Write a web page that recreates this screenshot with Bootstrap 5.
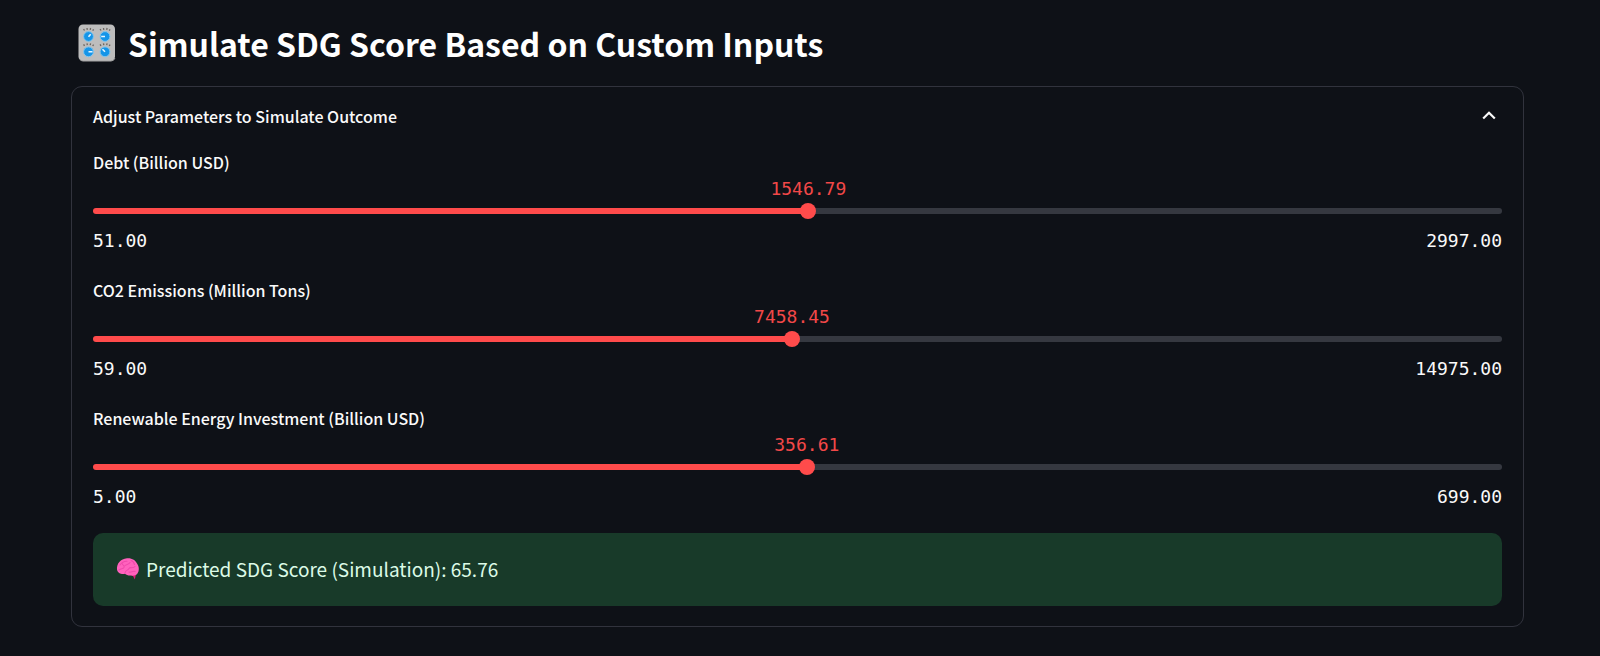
<!DOCTYPE html>
<html lang="en" data-bs-theme="dark">
<head>
<meta charset="utf-8">
<meta name="viewport" content="width=device-width, initial-scale=1">
<title>Simulate SDG Score</title>
<link href="https://cdn.jsdelivr.net/npm/bootstrap@5.3.0/dist/css/bootstrap.min.css" rel="stylesheet">
<style>
  body { background: #0e1117; color: #fafafa; font-family: "Noto Sans CJK SC", "Noto Sans", sans-serif; font-size: 16px; line-height: 24px; }
  .page { padding: 19px 76px 28px 71px; }
  .page-title { font-size: 32px; line-height: 48px; font-weight: 700; padding-left: 7px; gap: 12px; margin-bottom: 19px; }
  .panel { border: 1px solid #31333d; border-radius: 11px; padding: 17px 21px 20px; }
  .panel-toggle { color: inherit; font-weight: 500; margin-bottom: 22px; }
  .panel-toggle svg { margin-right: 6px; }
  .param { height: 105px; margin-bottom: 23px; }
  .param:last-of-type { margin-bottom: 22px; }
  .param label { font-weight: 500; line-height: 24px; }
  .readout { font-family: "DejaVu Sans Mono", monospace; font-size: 18px; line-height: 24px; }
  .current { color: #f24848; margin-left: var(--fill); transform: translateX(-50%); width: max-content; margin-top: 3px; }
  .slider { appearance: none; height: 16px; margin: 2px 0 10px; background: none; }
  .slider::-webkit-slider-runnable-track { height: 6px; border-radius: 3px; background: linear-gradient(to right, #ff4b4b var(--fill), #353840 var(--fill)); }
  .slider::-webkit-slider-thumb { appearance: none; width: 16px; height: 16px; margin-top: -5px; border: 0; border-radius: 50%; background: #ff4b4b; }
  .slider::-moz-range-track { height: 6px; border-radius: 3px; background: linear-gradient(to right, #ff4b4b var(--fill), #353840 var(--fill)); }
  .slider::-moz-range-thumb { width: 16px; height: 16px; border: 0; background: #ff4b4b; }
  .result { background: #183a29; color: #dcfbe7; border-radius: 10px; padding: 21px 23px 23px; font-size: 19px; line-height: 29px; gap: 6px; }
</style>
</head>
<body>
<main class="page">
  <h1 class="page-title d-flex align-items-center">
    <svg width="38" height="38" viewBox="0 0 38 38" aria-hidden="true">
      <defs>
        <g id="ticks" stroke="#6b645e" stroke-width="1.300"><path d="M-4-6l-.9-1.500M-1.200-6.700l-.3-1.800M1.700-6.700l.4-1.800M4.200-5.800l.9-1.400"/></g>
      </defs>
      <rect x=".5" y=".5" width="36.500" height="36.500" rx="4.500" fill="#bdbdbd"/>
      <path d="M2 35.500q1.500 1.500 3 1.500h28q3 0 4-3" fill="none" stroke="#a3a3a3"/>
      <g fill="#1595e8" stroke="#83c5ec" stroke-width="1">
        <circle cx="10.500" cy="12.500" r="4.900"/><circle cx="27" cy="12.500" r="4.900"/>
        <circle cx="10.500" cy="27.800" r="4.900"/><circle cx="27" cy="27.800" r="4.900"/>
      </g>
      <use href="#ticks" x="10.500" y="12.500"/><use href="#ticks" x="27" y="12.500"/>
      <use href="#ticks" x="10.500" y="27.800"/><use href="#ticks" x="27" y="27.800"/>
      <path d="M10.500 12.800l2.200-2.500M27 12.500h-3.800M10.500 27.800h4M27 27.800l-2.500-2.500" stroke="#e8f7ff" stroke-width="1.600"/>
    </svg>
    <span>Simulate SDG Score Based on Custom Inputs</span>
  </h1>

  <section class="panel">
    <button class="panel-toggle d-flex w-100 p-0 border-0 bg-transparent justify-content-between align-items-center text-start" type="button" data-bs-toggle="collapse" data-bs-target="#params" aria-expanded="true" aria-controls="params">
      <span>Adjust Parameters to Simulate Outcome</span>
      <svg width="14" height="12" viewBox="0 0 14 12" fill="none" stroke="#fafafa" stroke-width="2.200" aria-hidden="true"><path d="M1.200 8.500 7 2.800 12.800 8.500"/></svg>
    </button>

    <div class="collapse show" id="params">
      <div class="param" style="--fill:50.77%">
        <label class="d-block" for="debt">Debt (Billion USD)</label>
        <output class="readout current d-block" for="debt">1546.79</output>
        <input class="slider w-100 d-block" id="debt" type="range" min="51" max="2997" step="0.01" value="1546.79">
        <div class="readout d-flex justify-content-between"><span>51.00</span><span>2997.00</span></div>
      </div>
      <div class="param" style="--fill:49.61%">
        <label class="d-block" for="co2">CO2 Emissions (Million Tons)</label>
        <output class="readout current d-block" for="co2">7458.45</output>
        <input class="slider w-100 d-block" id="co2" type="range" min="59" max="14975" step="0.01" value="7458.45">
        <div class="readout d-flex justify-content-between"><span>59.00</span><span>14975.00</span></div>
      </div>
      <div class="param" style="--fill:50.66%">
        <label class="d-block" for="energy">Renewable Energy Investment (Billion USD)</label>
        <output class="readout current d-block" for="energy">356.61</output>
        <input class="slider w-100 d-block" id="energy" type="range" min="5" max="699" step="0.01" value="356.61">
        <div class="readout d-flex justify-content-between"><span>5.00</span><span>699.00</span></div>
      </div>

      <section class="result d-flex align-items-center" role="status">
        <svg width="24" height="24" viewBox="0 0 24 24" aria-hidden="true">
          <path d="M13 17.500l4 1.500 1.800 3.500 1-4.500z" fill="#d81b78"/>
          <path d="M1 12.500C.5 7 4.500 1.800 11 1.300c5-.4 8.500 2 10 5.200 2.300 3 2.500 7.500.3 10.200-1.800 2-4.300 2.200-6.300 1.800-2 .3-4.600-.2-6-1.700-2.800 1-7.500-.300-8-4.300z" fill="#ff62bd"/>
          <path d="M4 8c2-3 4-4 7-3.800M8 9.500c2-2.600 4.500-1.500 6-4M15 3.500c2 .5 3 2 3.500 4M3 13c2-2 4-.5 5-2.500M9 16c.5-3 3-2.500 4-4.500s4 .5 6-2M13 15c2 1 4-1.500 6-.5M6 6.500l1.500 2" fill="none" stroke="#f04aac" stroke-width="1.100" stroke-linecap="round"/>
        </svg>
        <span>Predicted SDG Score (Simulation): 65.76</span>
      </section>
    </div>
  </section>
</main>
<script src="https://cdn.jsdelivr.net/npm/bootstrap@5.3.0/dist/js/bootstrap.bundle.min.js"></script>
<script>
  document.querySelectorAll('.slider').forEach(function (slider) {
    slider.addEventListener('input', function () {
      var group = slider.closest('.param');
      var share = (slider.value - slider.min) / (slider.max - slider.min) * 100;
      group.style.setProperty('--fill', share + '%');
      group.querySelector('output').textContent = Number(slider.value).toFixed(2);
    });
  });
</script>
</body>
</html>
